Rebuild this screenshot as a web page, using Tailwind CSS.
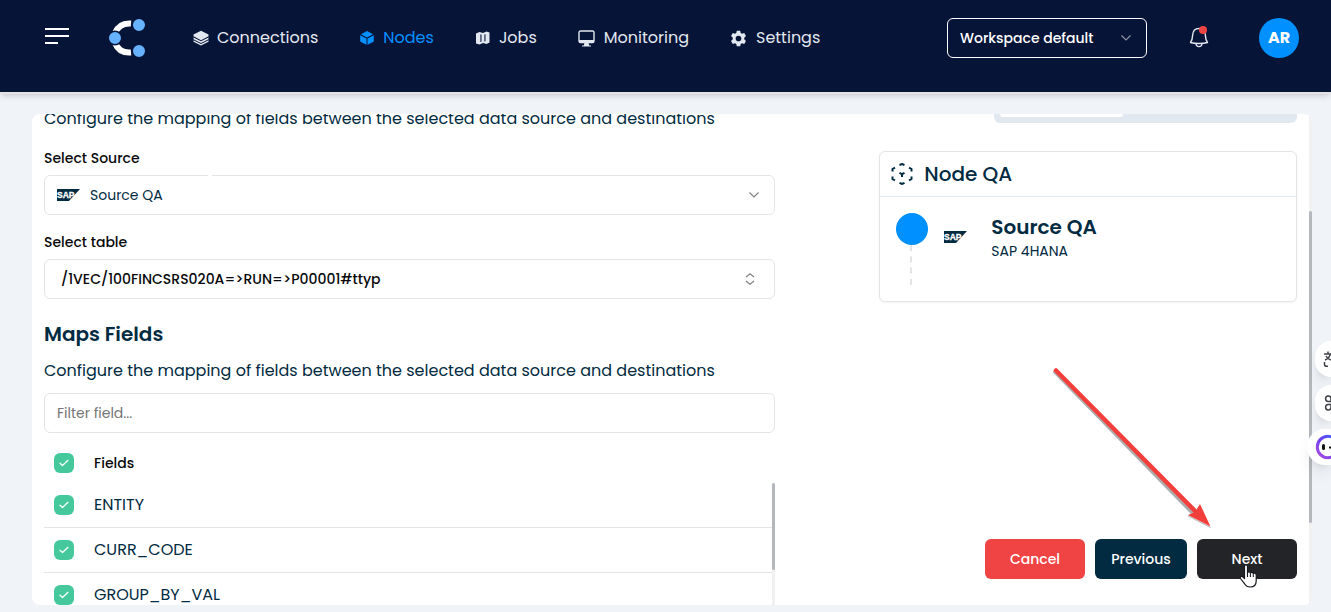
<!DOCTYPE html>
<html lang="en">
<head>
<meta charset="utf-8">
<meta name="viewport" content="width=device-width, initial-scale=1">
<title>Nodes</title>
<script src="https://cdn.jsdelivr.net/npm/@tailwindcss/browser@4"></script>
</head>
<body class="relative flex h-screen flex-col overflow-hidden bg-[#f0f3f8] font-['Poppins',Inter,sans-serif] text-[#022b42]">

<svg class="hidden" aria-hidden="true">
  <symbol id="sap" viewBox="0 0 23 12">
    <path d="M0 0H23L12 12H0Z" fill="#022b42"/>
    <text x="0" y="9" font-family="Liberation Sans, sans-serif" font-weight="700" font-size="8.500" fill="#fff" stroke="#fff" stroke-width=".3">SAP</text>
  </symbol>
  <symbol id="chevron" viewBox="0 0 10 6"><path d="M.5.5 5 5 9.500.5" fill="none" stroke="currentColor" stroke-width="1.200"/></symbol>
  <symbol id="check" viewBox="0 0 10 8"><path d="M1 4.200 3.500 6.500 9 1.300" fill="none" stroke="#fff" stroke-width="1.200" stroke-linecap="round" stroke-linejoin="round"/></symbol>
</svg>

<header class="flex h-[94px] shrink-0 items-start border-b-2 border-[#e3e3e3] bg-[#061437] pr-8 pl-[45px] shadow-md">
  <button type="button" aria-label="Menu" class="mt-7 flex w-6 flex-col gap-[5px]">
    <span class="h-0.5 w-6 bg-white"></span><span class="h-0.5 w-6 bg-white"></span><span class="h-0.5 w-[13px] bg-white"></span>
  </button>
  <a href="#" aria-label="Home" class="mt-[19px] ml-10">
    <svg class="h-[38px] w-[37px]" viewBox="0 0 37 38">
      <path d="M22 4.500C13.500 3.800 8.500 8 6 14M6 24c2.500 6 7.500 10.200 16 9.500" fill="none" stroke="#fff" stroke-width="6"/>
      <g fill="#66b2ff" stroke="#061437" stroke-width="1.600"><circle cx="30" cy="6" r="6.800"/><circle cx="6" cy="19" r="6.800"/><circle cx="30" cy="32" r="6.800"/></g>
    </svg>
  </a>
  <nav class="mt-[26px] ml-[47px] flex gap-[41px] text-base leading-6 text-[#e2e8f0]">
    <a href="#" class="flex items-center gap-2 whitespace-nowrap">
      <svg class="h-4 w-4 shrink-0" viewBox="0 0 16 16" fill="currentColor"><path d="M8 .7 15.500 4.600V6.300L8 10.200.5 6.300V4.600Z"/><path d="M.5 7.400 8 11.200l7.500-3.800v1.800L8 13 .5 9.200Z"/><path d="M.5 10.200 8 14l7.500-3.800v1.600L8 15.600.5 11.800Z"/></svg>Connections</a>
    <a href="#" aria-current="page" class="flex items-center gap-2 whitespace-nowrap text-[#0090ff]">
      <svg class="h-4 w-4 shrink-0" viewBox="0 0 16 16" fill="currentColor"><path d="M8 1 14 4.200 8 7.400 2 4.200Z"/><path d="M1.200 5.200 7.500 8.500V14.800L2 12Q1.200 11.500 1.200 10.700Z"/><path d="M14.800 5.200 8.500 8.500V14.800L14 12Q14.800 11.500 14.800 10.700Z"/></svg>Nodes</a>
    <a href="#" class="flex items-center gap-2 whitespace-nowrap">
      <svg class="h-4 w-4 shrink-0" viewBox="0 0 16 16"><path d="M1 3.500 4.500 2 8 3 11.500 1.500 14.500 2.500V12.500L11.500 14 8 13 4.500 14.500 1 13.500Z" fill="#e2e8f0"/><path d="M5 4.300 6.800 4.800V11.700L5 12ZM9 4.800 10.800 4V11L9 11.700Z" fill="#5e6880"/></svg>Jobs</a>
    <a href="#" class="flex items-center gap-[9px] whitespace-nowrap">
      <svg class="h-[17px] w-[17px] shrink-0" viewBox="0 0 17 17"><rect x="1" y="1" width="15" height="11.500" rx="1.500" fill="none" stroke="#e2e8f0" stroke-width="1.400"/><path d="M1 10h15v2.500H1ZM6.500 12.500h4l.7 3H13v1H4v-1h1.800Z" fill="#e2e8f0"/></svg>Monitoring</a>
    <a href="#" class="flex items-center gap-[9px] whitespace-nowrap">
      <svg class="h-[17px] w-[17px] shrink-0" viewBox="0 0 24 24" fill="currentColor"><path fill-rule="evenodd" d="M9.600 1h4.800l.7 3.200 1.900 1.100 3.100-1 2.400 4.200-2.400 2.300v2.300l2.400 2.300-2.400 4.200-3.100-1-1.900 1.100-.7 3.300H9.600l-.7-3.300L7 18.600l-3.100 1-2.400-4.200 2.400-2.300v-2.300L1.500 8.500l2.400-4.200 3.100 1 1.900-1.100ZM12 8a4 4 0 1 0 0 8 4 4 0 0 0 0-8Z"/></svg>Settings</a>
  </nav>
  <div class="relative mt-[18px] ml-auto w-[200px]">
    <select aria-label="Workspace" class="h-10 w-full appearance-none rounded-md border border-white bg-transparent px-3 text-sm font-medium text-white"><option>Workspace default</option></select>
    <svg class="pointer-events-none absolute top-[17px] right-4 h-1.5 w-2.5 text-[#8d94a5]"><use href="#chevron"/></svg>
  </div>
  <button type="button" aria-label="Notifications" class="mt-[25px] ml-[42px]">
    <svg class="h-6 w-5" viewBox="0 0 20 24"><path d="M1.500 17.500c2-2.500 2-4 2.200-8C4 5.500 6.500 3.500 10 3.500s6 2 6.300 6c.2 4 .2 5.500 2.200 8-4.500 1.400-12.500 1.400-17 0Z" fill="none" stroke="#e2e8f0" stroke-width="1.400" stroke-linejoin="round"/><path d="M7 18.800c.3 3.800 5.700 3.800 6 0" fill="none" stroke="#e2e8f0" stroke-width="1.400"/><circle cx="14" cy="5" r="4" fill="#ef4444"/></svg>
  </button>
  <button type="button" class="mt-[18px] ml-[50px] h-10 w-10 rounded-full bg-[#0090ff] text-base font-bold text-white">AR</button>
</header>

<main class="mt-5 mr-[19px] mb-[7px] ml-8 flex min-h-0 flex-1 overflow-hidden rounded-lg bg-white">
  <div class="flex min-w-0 flex-1 justify-between px-3">
    <section class="-mt-[7px] w-7/12">
      <p class="text-base leading-6 whitespace-nowrap">Configure the mapping of fields between the selected data source and destinations</p>

      <label for="source" class="mt-[17px] block text-sm font-medium text-[#09090b]">Select Source</label>
      <div class="relative mt-[7px]">
        <select id="source" class="block h-10 w-full appearance-none rounded-md border border-[#e4e4e7] bg-white pl-[45px] text-sm"><option>Source QA</option></select>
        <span class="absolute top-0 left-[164px] h-px w-1 bg-white"></span>
        <svg class="pointer-events-none absolute top-3.5 left-[13px] h-3 w-[23px]"><use href="#sap"/></svg>
        <svg class="pointer-events-none absolute top-[17px] right-4 h-1.5 w-2.5 text-[#808080]"><use href="#chevron"/></svg>
      </div>

      <label for="table" class="mt-[17px] block text-sm font-medium text-[#09090b]">Select table</label>
      <div class="relative mt-[7px]">
        <select id="table" class="block h-10 w-full appearance-none rounded-md border border-[#e4e4e7] bg-white pl-4 text-sm font-medium text-[#09090b]"><option>/1VEC/100FINCSRS020A=&gt;RUN=&gt;P00001#ttyp</option></select>
        <svg class="pointer-events-none absolute top-3.5 right-5 h-3 w-2.5" viewBox="0 0 10 12" fill="none" stroke="#808080" stroke-width="1.200"><path d="M1 4 5 .8 9 4M1 8l4 3.200L9 8"/></svg>
      </div>

      <h2 class="mt-[21px] text-xl leading-7 font-semibold">Maps Fields</h2>
      <p class="mt-[11px] text-base leading-6 whitespace-nowrap">Configure the mapping of fields between the selected data source and destinations</p>
      <input type="text" aria-label="Filter field" placeholder="Filter field..." class="mt-2.5 block h-10 w-full rounded-md border border-[#e4e4e7] px-3 text-sm placeholder:text-[#757575]">

      <div class="mt-2.5 flex">
        <table class="flex-1 border-separate border-spacing-0 text-left">
          <thead>
            <tr class="h-10">
              <th class="w-[50px] p-0 pl-2.5"><span class="relative block h-5 w-5"><input type="checkbox" checked aria-label="Select all fields" class="block h-5 w-5 appearance-none rounded-md bg-[#45c99c]"><svg class="pointer-events-none absolute inset-0 m-auto h-2 w-2.5"><use href="#check"/></svg></span></th>
              <th class="p-0 text-sm font-medium text-[#09090b]">Fields</th>
            </tr>
          </thead>
          <tbody class="text-base">
            <tr class="h-[45px]">
              <td class="border-b border-[#e4e4e7] p-0 pl-2.5"><span class="relative block h-5 w-5"><input id="f1" type="checkbox" checked class="block h-5 w-5 appearance-none rounded-md bg-[#45c99c]"><svg class="pointer-events-none absolute inset-0 m-auto h-2 w-2.5"><use href="#check"/></svg></span></td>
              <td class="border-b border-[#e4e4e7] p-0"><label for="f1">ENTITY</label></td>
            </tr>
            <tr class="h-[45px]">
              <td class="border-b border-[#e4e4e7] p-0 pl-2.5"><span class="relative block h-5 w-5"><input id="f2" type="checkbox" checked class="block h-5 w-5 appearance-none rounded-md bg-[#45c99c]"><svg class="pointer-events-none absolute inset-0 m-auto h-2 w-2.5"><use href="#check"/></svg></span></td>
              <td class="border-b border-[#e4e4e7] p-0"><label for="f2">CURR_CODE</label></td>
            </tr>
            <tr class="h-[45px]">
              <td class="border-b border-[#e4e4e7] p-0 pl-2.5"><span class="relative block h-5 w-5"><input id="f3" type="checkbox" checked class="block h-5 w-5 appearance-none rounded-md bg-[#45c99c]"><svg class="pointer-events-none absolute inset-0 m-auto h-2 w-2.5"><use href="#check"/></svg></span></td>
              <td class="border-b border-[#e4e4e7] p-0"><label for="f3">GROUP_BY_VAL</label></td>
            </tr>
          </tbody>
        </table>
        <div class="mt-10 w-[3px] bg-[#f1f1f1]"><div class="h-[87px] rounded-full bg-[#b4b8bd]"></div></div>
      </div>
    </section>

    <aside class="flex w-4/12 flex-col">
      <div class="flex h-[9px] w-[303px] self-end rounded-b-md bg-[#e2e8f0] px-1.5 pb-1.5"><div class="w-[123px] rounded-b-sm bg-white"></div></div>
      <div class="mt-7 h-[151px] rounded-md border border-[#e4e4e7] shadow-xs">
        <div class="flex h-[45px] items-center gap-[11px] border-b border-[#e2e8f0] pl-[11px]">
          <svg class="h-[22px] w-[22px]" viewBox="0 0 22 22" fill="none" stroke="#022b42" stroke-width="2"><path d="M8.500 2 11 1l2.500 1M1.500 8.500V6L4 4.600M18 4.600 20.500 6v2.500M1.500 13.500V16L4 17.400M18 17.400l2.500-1.400v-2.500M8.500 19.800 11 21l2.500-1.200M8.500 9.800 11 11.200l2.500-1.400M11 11v3"/></svg>
          <h2 class="text-xl font-medium">Node QA</h2>
        </div>
        <div class="flex pt-4 pl-4">
          <div class="flex w-8 flex-col items-center">
            <div class="h-8 w-8 rounded-full bg-[#0090ff]"></div>
            <svg class="mr-0.5 h-10 w-0.5" viewBox="0 0 2 40"><path d="M1 0v40" stroke="#e2e3e5" stroke-width="2" stroke-dasharray="6 5.300"/></svg>
          </div>
          <svg class="mt-[18px] ml-4 h-3 w-[23px]"><use href="#sap"/></svg>
          <div class="ml-6">
            <h3 class="text-xl leading-7 font-semibold">Source QA</h3>
            <p class="text-sm">SAP 4HANA</p>
          </div>
        </div>
      </div>
      <div class="mt-auto mb-[26px] flex justify-end gap-2.5 text-sm font-medium text-white">
        <button type="button" class="h-10 w-[100px] rounded-md bg-[#f04444]">Cancel</button>
        <button type="button" class="h-10 w-[92px] rounded-md bg-[#022b42]">Previous</button>
        <button type="button" class="h-10 w-[100px] rounded-md bg-[#232428]">Next</button>
      </div>
    </aside>
  </div>
  <div class="w-[3px] shrink-0 bg-[#f1f1f1] pt-[97px]"><div class="h-[312px] rounded-full bg-[#b4b8bd]"></div></div>
</main>

<!-- Pointer arrow and mouse cursor over the actions -->
<svg class="pointer-events-none absolute top-[366px] right-[116px] h-[166px] w-[164px]" viewBox="0 0 164 166">
  <g fill="none" stroke="#8a8a8a" opacity=".7"><path d="M4.500 6 144 149" stroke-width="4.500" stroke-linecap="round"/><path d="M159.500 161.500 137 149.800"/></g>
  <path d="M5 4.500 146 147" stroke="#f23f3c" stroke-width="4.500" stroke-linecap="round"/><path d="M149 138 159.500 160.500 137 149 144 146Z" fill="#f23f3c"/>
</svg>
<svg class="pointer-events-none absolute top-[564px] right-[73px] h-6 w-[19px]" viewBox="0 0 19 24"><path d="M5.500 14.500V2.500c0-2 3-2 3 0V9c.3-1.800 2.800-1.500 2.900.2.5-1.400 2.700-1.100 2.900.6.700-1.200 2.900-.7 2.900 1.200v6c0 4-2.700 6-6 6-3 0-4.300-1-5.700-3.300L1.500 14.500c-1-2 1.300-2.800 2.400-1.500Z" fill="#fff" stroke="#15171c" stroke-width="1.200" stroke-linejoin="round"/><path d="M8.500 9v4M11.400 9.500V13M14.300 10.300V13" stroke="#15171c" stroke-width="1.100"/></svg>

<!-- Floating side tools -->
<div class="absolute top-[341px] right-0 flex flex-col items-end gap-2 text-[#3f4147]">
  <button type="button" aria-label="Translate" class="h-9 w-4 rounded-l-full bg-white pl-2 shadow-lg"><svg class="h-5 w-2" viewBox="0 0 8 20" fill="none" stroke="currentColor" stroke-width="1.500"><path d="M1 5h7M5 2.500V5M2 11c3-1 4.500-3 5.500-6M3 7c1 2 3 3.500 5 4M1.500 13v2.500c0 1.200.8 1.800 2 1.800H5"/></svg></button>
  <button type="button" aria-label="Apps" class="h-9 w-4 rounded-l-full bg-white pl-2 shadow-lg"><svg class="h-5 w-2" viewBox="0 0 8 20" fill="none" stroke="currentColor" stroke-width="1.500"><path d="M8 8.500H5.500A2.700 2.700 0 1 1 8 5.500ZM5.500 11.500A2.700 2.700 0 1 0 8 14.500V11.500Z"/></svg></button>
  <button type="button" aria-label="Assistant" class="h-9 w-6 rounded-l-full bg-white pl-2 shadow-lg"><svg class="h-7 w-4" viewBox="0 0 16 28"><defs><linearGradient id="ring" x1="0" y1="1" x2="1" y2="0"><stop offset="0" stop-color="#b14be0"/><stop offset=".5" stop-color="#6a3ff0"/><stop offset="1" stop-color="#3a6cff"/></linearGradient></defs><circle cx="13" cy="14" r="10.700" fill="none" stroke="url(#ring)" stroke-width="3"/><rect x="7" y="11" width="3" height="6" rx="1.500" fill="#111"/><path d="M14 14.500h2" stroke="#111" stroke-width="2"/></svg></button>
</div>
</body>
</html>
